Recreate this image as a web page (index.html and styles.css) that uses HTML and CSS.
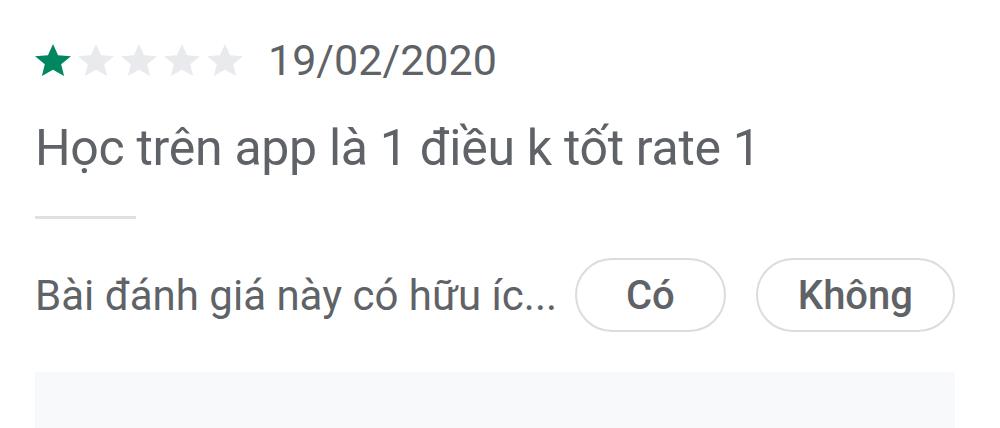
FILE: index.html
```html
<!DOCTYPE html>
<html lang="vi">
<head>
<meta charset="UTF-8">
<meta name="viewport" content="width=device-width,initial-scale=1.0">
<title>Đánh giá</title>
<link rel="stylesheet" href="styles.css">
</head>
<body>
<div class="review">
<div class="meta">
<div class="stars">
<svg class="star on" viewBox="2 2 20 19" preserveAspectRatio="none"><path d="M12 17.27L18.18 21l-1.64-7.03L22 9.24l-7.19-.61L12 2 9.19 8.63 2 9.24l5.46 4.73L5.82 21z"/></svg>
<svg class="star" viewBox="2 2 20 19" preserveAspectRatio="none"><path d="M12 17.27L18.18 21l-1.64-7.03L22 9.24l-7.19-.61L12 2 9.19 8.63 2 9.24l5.46 4.73L5.82 21z"/></svg>
<svg class="star" viewBox="2 2 20 19" preserveAspectRatio="none"><path d="M12 17.27L18.18 21l-1.64-7.03L22 9.24l-7.19-.61L12 2 9.19 8.63 2 9.24l5.46 4.73L5.82 21z"/></svg>
<svg class="star" viewBox="2 2 20 19" preserveAspectRatio="none"><path d="M12 17.27L18.18 21l-1.64-7.03L22 9.24l-7.19-.61L12 2 9.19 8.63 2 9.24l5.46 4.73L5.82 21z"/></svg>
<svg class="star" viewBox="2 2 20 19" preserveAspectRatio="none"><path d="M12 17.27L18.18 21l-1.64-7.03L22 9.24l-7.19-.61L12 2 9.19 8.63 2 9.24l5.46 4.73L5.82 21z"/></svg>
</div>
<span class="date">19/02/2020</span>
</div>
<p class="text">Học trên app là 1 điều k tốt rate 1</p>
<div class="divider"></div>
<div class="helpful">
<span class="question">Bài đánh giá này có hữu íc...</span>
<button class="pill">Có</button>
<button class="pill">Không</button>
</div>
<div class="reply"></div>
</div>
</body>
</html>
```

FILE: styles.css
```css
body{
margin:0;
background:#ffffff;
font-family:Roboto,"Liberation Sans",Arial,sans-serif;
color:#5f6368;
overflow:hidden;
}
.review{
padding:0 45px 0 35px;
}
.meta{
display:flex;
align-items:center;
height:36px;
margin-top:42px;
}
.stars{
display:flex;
gap:7px;
}
.star{
width:36px;
height:32px;
fill:#e8eaed;
}
.star.on{
fill:#01875f;
}
.date{
margin-left:25px;
font-size:43px;
line-height:36px;
}
.text{
margin:40px 0 0;
font-size:50px;
line-height:60px;
letter-spacing:-0.3px;
}
.divider{
width:101px;
height:3px;
margin-top:38px;
background:#e0e0e0;
}
.helpful{
display:flex;
align-items:center;
margin-top:39px;
}
.question{
flex:1;
min-width:0;
margin-right:8px;
font-size:42px;
white-space:nowrap;
}
.pill{
min-width:151px;
height:74px;
padding:0 40px;
border:2px solid #dadce0;
border-radius:37px;
background:#ffffff;
color:#5f6368;
font-family:Roboto,"Liberation Sans",Arial,sans-serif;
font-size:40px;
font-weight:500;
}
.pill+.pill{
margin-left:30px;
}
.reply{
height:90px;
margin-top:40px;
background:#f8f9fa;
}
```
